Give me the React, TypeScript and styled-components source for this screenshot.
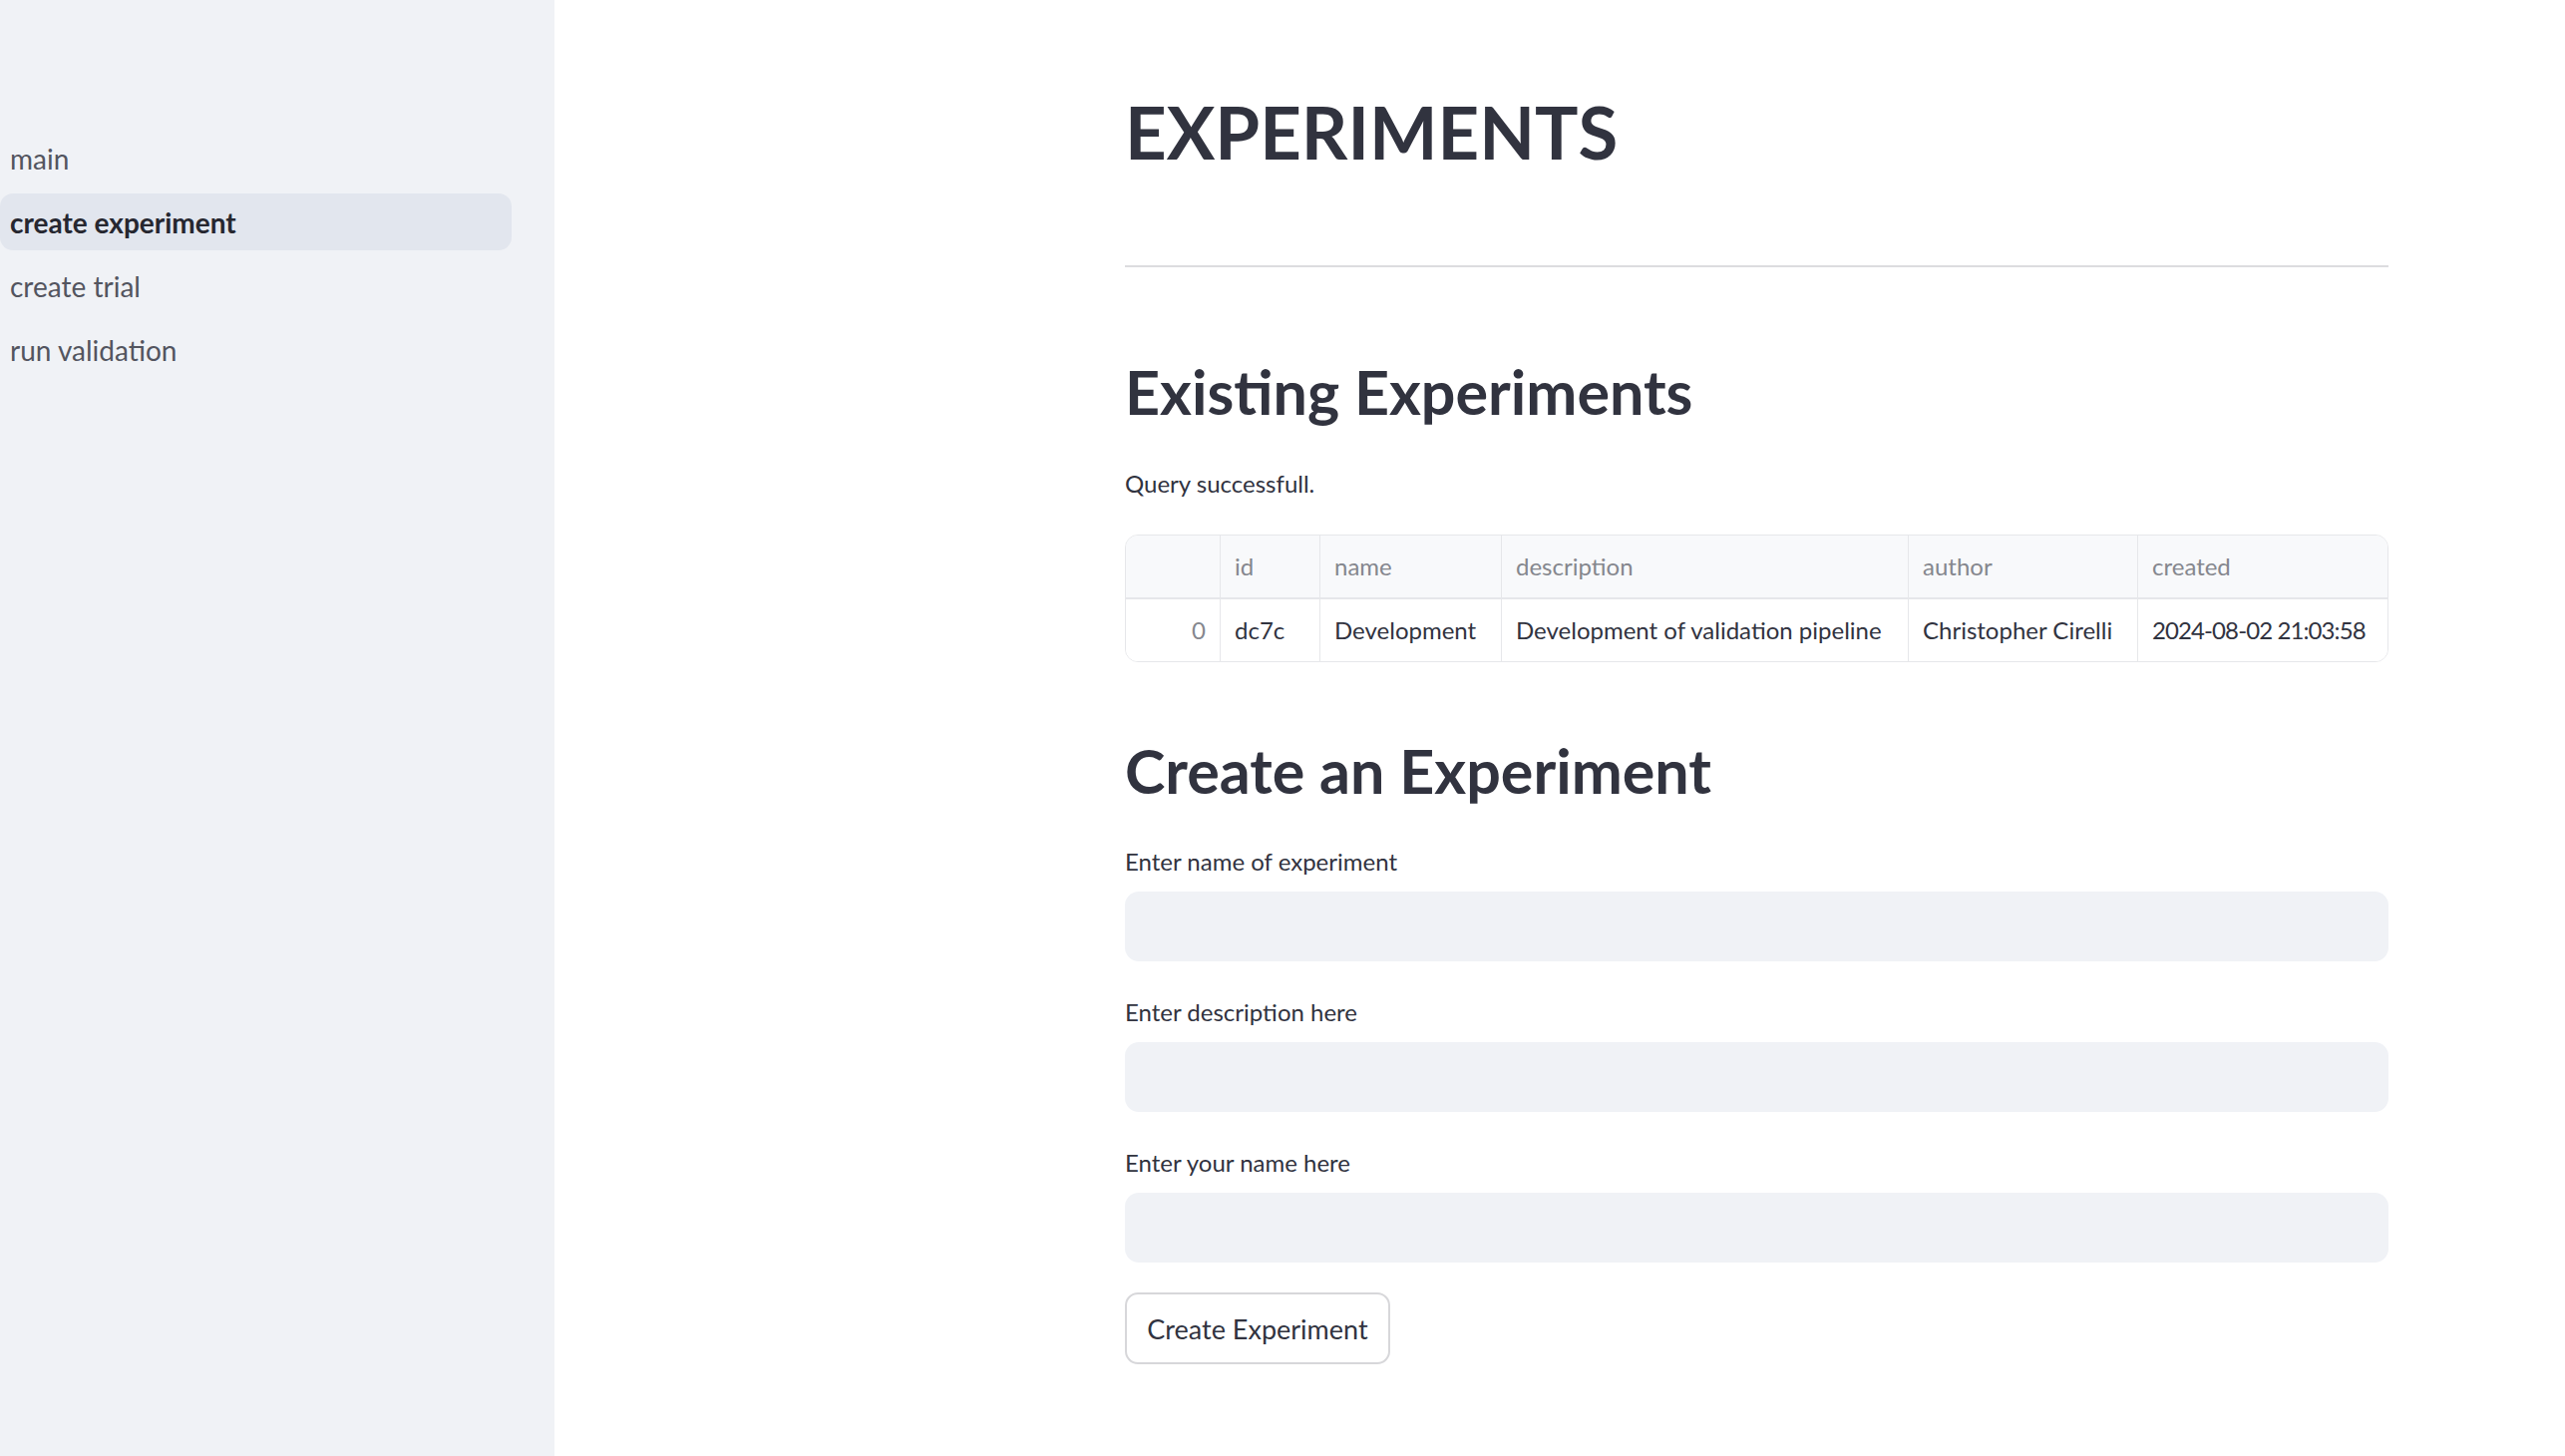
import React from "react";
import styled, { createGlobalStyle } from "styled-components";

const Global = createGlobalStyle`
  html, body { margin: 0; padding: 0; background: #ffffff; }
  body { font-family: Lato, "Liberation Sans", sans-serif; color: #31333f; }
  #root { height: 1460px; }
`;

const Shell = styled.div`
  display: flex;
  height: 1460px;
  overflow: hidden;
`;

const Sidebar = styled.aside`
  width: 556px;
  flex: 0 0 556px;
  background: #f0f2f6;
  padding: 130px 43px 0 0;
  box-sizing: border-box;
  display: flex;
  flex-direction: column;
  gap: 7px;
`;

const NavItem = styled.a<{ $active?: boolean }>`
  display: flex;
  align-items: center;
  height: 57px;
  padding-left: 10px;
  border-radius: 13px;
  font-size: 28px;
  font-weight: ${(p) => (p.$active ? 700 : 400)};
  color: ${(p) => (p.$active ? "#262730" : "#53555f")};
  background: ${(p) => (p.$active ? "#e2e6ee" : "transparent")};
  text-decoration: none;
  cursor: pointer;
`;

const Main = styled.main`
  flex: 1;
  padding: 82px 0 0 572px;
  box-sizing: border-box;
`;

const Content = styled.div`
  width: 1267px;
  display: flex;
  flex-direction: column;
`;

const Title = styled.h1`
  margin: 0;
  height: 100px;
  line-height: 100px;
  font-size: 72.5px;
  font-weight: 700;
  color: #31333f;
`;

const Divider = styled.hr`
  margin: 84px 0 0 0;
  border: none;
  height: 2px;
  background: #dcdcdf;
`;

const Heading = styled.h2<{ $top: number }>`
  margin: ${(p) => p.$top}px 0 0 0;
  height: 80px;
  line-height: 78px;
  font-size: 61px;
  font-weight: 700;
  color: #31333f;
`;

const Text = styled.p`
  margin: 31px 0 0 0;
  line-height: 40px;
  font-size: 24px;
  color: #31333f;
`;

const Table = styled.div`
  margin-top: 31px;
  border: 1px solid #e6e7ea;
  border-radius: 13px;
  overflow: hidden;
  display: grid;
  grid-template-columns: 95px 100px 182px 408px 230px 1fr;
`;

const Cell = styled.div<{ $head?: boolean; $index?: boolean; $last?: boolean; $tight?: boolean }>`
  height: ${(p) => (p.$head ? 64 : 62)}px;
  box-sizing: border-box;
  display: flex;
  align-items: center;
  justify-content: ${(p) => (p.$index ? "flex-end" : "flex-start")};
  padding: 0 14px 1px 14px;
  font-size: 24px;
  letter-spacing: ${(p) => (p.$tight ? "-0.9px" : "0")};
  white-space: nowrap;
  overflow: hidden;
  background: ${(p) => (p.$head ? "#f8f9fb" : "#ffffff")};
  color: ${(p) => (p.$head || p.$index ? "#85878e" : "#31333f")};
  border-right: ${(p) => (p.$last ? "none" : "1px solid #e6e7ea")};
  border-bottom: ${(p) => (p.$head ? "2px solid #e6e7ea" : "none")};
`;

const Field = styled.div<{ $top: number }>`
  margin-top: ${(p) => p.$top}px;
  display: flex;
  flex-direction: column;
  gap: 10px;
`;

const Label = styled.label`
  line-height: 40px;
  font-size: 24px;
  color: #31333f;
`;

const Input = styled.input`
  height: 70px;
  box-sizing: border-box;
  border: none;
  border-radius: 14px;
  background: #f0f2f6;
  padding: 0 20px;
  font-family: inherit;
  font-size: 25px;
  outline: none;
`;

const Button = styled.button`
  margin-top: 30px;
  align-self: flex-start;
  width: 266px;
  height: 72px;
  box-sizing: border-box;
  border: 2px solid #d7d7da;
  border-radius: 13px;
  background: #ffffff;
  font-family: inherit;
  font-size: 27px;
  color: #31333f;
  cursor: pointer;
`;

const columns = ["", "id", "name", "description", "author", "created"];
const row = ["0", "dc7c", "Development", "Development of validation pipeline", "Christopher Cirelli", "2024-08-02 21:03:58"];

export default function App() {
  return (
    <>
      <Global />
      <Shell>
        <Sidebar>
          <NavItem>main</NavItem>
          <NavItem $active>create experiment</NavItem>
          <NavItem>create trial</NavItem>
          <NavItem>run validation</NavItem>
        </Sidebar>
        <Main>
          <Content>
            <Title>EXPERIMENTS</Title>
            <Divider />
            <Heading $top={86}>Existing Experiments</Heading>
            <Text>Query successfull.</Text>
            <Table>
              {columns.map((c, i) => (
                <Cell key={"h" + i} $head $last={i === columns.length - 1}>
                  {c}
                </Cell>
              ))}
              {row.map((c, i) => (
                <Cell
                  key={"r" + i}
                  $index={i === 0}
                  $last={i === row.length - 1}
                  $tight={i === row.length - 1}
                >
                  {c}
                </Cell>
              ))}
            </Table>
            <Heading $top={70}>Create an Experiment</Heading>
            <Field $top={30}>
              <Label>Enter name of experiment</Label>
              <Input type="text" />
            </Field>
            <Field $top={31}>
              <Label>Enter description here</Label>
              <Input type="text" />
            </Field>
            <Field $top={31}>
              <Label>Enter your name here</Label>
              <Input type="text" />
            </Field>
            <Button>Create Experiment</Button>
          </Content>
        </Main>
      </Shell>
    </>
  );
}
